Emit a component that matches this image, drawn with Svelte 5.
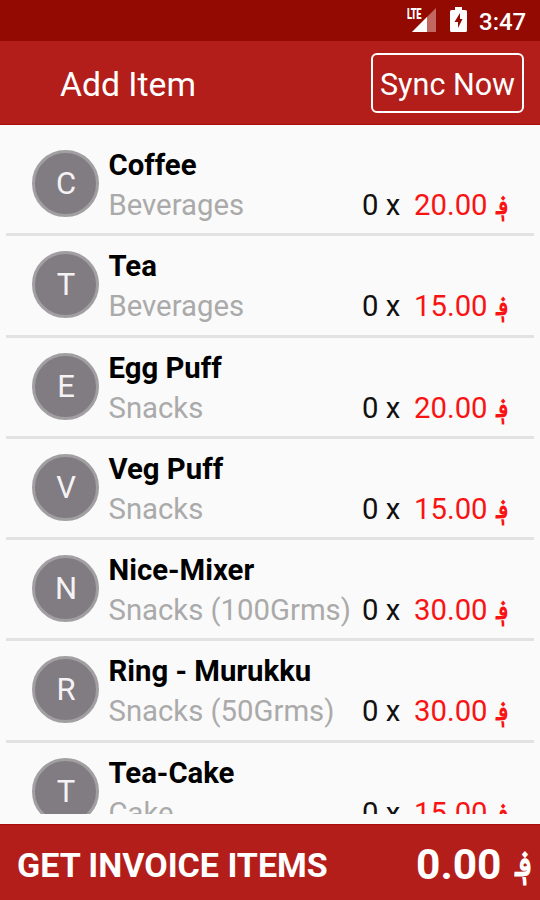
<script>
  let items = [
    { name: "Coffee", category: "Beverages", qty: 0, price: 20 },
    { name: "Tea", category: "Beverages", qty: 0, price: 15 },
    { name: "Egg Puff", category: "Snacks", qty: 0, price: 20 },
    { name: "Veg Puff", category: "Snacks", qty: 0, price: 15 },
    { name: "Nice-Mixer", category: "Snacks (100Grms)", qty: 0, price: 30 },
    { name: "Ring - Murukku", category: "Snacks (50Grms)", qty: 0, price: 30 },
    { name: "Tea-Cake", category: "Cake", qty: 0, price: 15 },
  ];
  let currency = "؋";

  $: total = items.reduce((sum, item) => sum + item.qty * item.price, 0);

  function addItem(item) {
    item.qty += 1;
    items = items;
  }
</script>

<div class="screen">
  <div class="status">
    <span class="lte">LTE</span>
    <svg class="signal" width="24" height="24" viewBox="0 0 24 24">
      <path d="M0 24 L24 0 V24 Z" fill="#c26863" />
      <path d="M0 24 L15 9 V24 Z" fill="#fff" />
    </svg>
    <svg class="battery" width="17" height="25" viewBox="0 0 17 25">
      <path d="M5 0 H12 V3 H15.5 Q17 3 17 4.5 V23.5 Q17 25 15.5 25 H1.5 Q0 25 0 23.5 V4.5 Q0 3 1.5 3 H5 Z" fill="#fff" />
      <path d="M10 6 L4.5 15 H8 V21 L12.5 12 H10 Z" fill="#930a03" />
    </svg>
    <span class="clock">3:47</span>
  </div>

  <div class="appbar">
    <span class="title">Add Item</span>
    <button class="sync">Sync Now</button>
  </div>

  <div class="list">
    {#each items as item}
      <!-- svelte-ignore a11y_click_events_have_key_events, a11y_no_static_element_interactions -->
      <div class="row" on:click={() => addItem(item)}>
        <div class="avatar">{item.name[0]}</div>
        <div class="info">
          <div class="name">{item.name}</div>
          <div class="details">
            <span class="category">{item.category}</span>
            <span class="qty">{item.qty} x</span>
            <span class="price">{item.price.toFixed(2)}</span>
            <span class="currency">{currency}</span>
          </div>
        </div>
      </div>
    {/each}
  </div>

  <div class="footer">
    <span class="invoice">GET INVOICE ITEMS</span>
    <span class="total">{total.toFixed(2)}</span>
    <span class="currency big">{currency}</span>
  </div>
</div>

<style>
  :global(body) {
    margin: 0;
  }

  .screen {
    width: 540px;
    height: 900px;
    display: flex;
    flex-direction: column;
    overflow: hidden;
    background-color: #fafafa;
    font-family: Roboto, "Liberation Sans", sans-serif;
    white-space: nowrap;
  }

  .status {
    height: 41px;
    flex: none;
    display: flex;
    align-items: flex-start;
    justify-content: flex-end;
    box-sizing: border-box;
    padding-right: 14px;
    background-color: #930a03;
    color: #fff;
  }

  .lte {
    width: 5px;
    margin-top: 8px;
    font-size: 15px;
    line-height: 13px;
    font-weight: 900;
    letter-spacing: -0.6px;
    transform: scaleX(0.62);
    transform-origin: left;
  }

  .signal {
    margin-top: 8px;
  }

  .battery {
    margin: 7px 0 0 14px;
  }

  .clock {
    width: 47px;
    margin: 8px 0 0 12px;
    font-size: 24px;
    line-height: 28px;
    font-weight: 500;
  }

  .appbar {
    height: 84px;
    flex: none;
    display: flex;
    align-items: center;
    justify-content: space-between;
    box-sizing: border-box;
    padding: 0 16px 0 60px;
    background-color: #b31e1a;
    border-bottom: 1px solid #a90e0a;
    color: #fff;
  }

  .title {
    font-size: 33.7px;
    line-height: 40px;
    padding-top: 4px;
  }

  .sync {
    width: 153px;
    height: 60px;
    padding: 4px 0 0;
    border: 2px solid #fff;
    border-radius: 6px;
    background: none;
    color: #fff;
    font-family: inherit;
    font-size: 30.5px;
  }

  .list {
    height: 689px;
    flex: none;
    box-sizing: border-box;
    padding: 10px 6px 0;
    overflow: hidden;
  }

  .row {
    height: 101.25px;
    display: flex;
    box-sizing: border-box;
    padding: 15px 0 0 26px;
    border-bottom: 3px solid #e2e2e2;
  }

  .avatar {
    width: 67px;
    height: 67px;
    flex: none;
    box-sizing: border-box;
    border: 3px solid #a19fa1;
    border-radius: 50%;
    background-color: #817b82;
    color: #f4f2f4;
    font-size: 31px;
    line-height: 61px;
    text-align: center;
    text-indent: 1px;
  }

  .info {
    flex: 1;
    margin-left: 9.5px;
  }

  .name {
    margin-top: -5px;
    font-size: 29.3px;
    line-height: 40px;
    font-weight: 700;
    color: #000;
  }

  .details {
    display: flex;
    font-size: 29.3px;
    line-height: 40px;
  }

  .category {
    flex: 1;
    color: #aaa;
  }

  .qty {
    width: 52px;
    color: #111;
  }

  .price {
    width: 80px;
    color: #f91414;
  }

  .currency {
    width: 40px;
    font-size: 26px;
    font-weight: 700;
    color: #f91414;
    transform: scaleX(0.85);
    transform-origin: 14px 50%;
  }

  .footer {
    height: 76px;
    margin-top: auto;
    display: flex;
    align-items: center;
    box-sizing: border-box;
    padding: 3px 0 0 17px;
    background-color: #b31e1a;
    border-top: 1px solid #a90e0a;
    color: #fff;
    font-weight: 700;
  }

  .invoice {
    flex: 1;
    padding-top: 2px;
    font-size: 34px;
  }

  .total {
    width: 96px;
    font-size: 42.5px;
  }

  .big {
    width: 28px;
    font-size: 36px;
    color: #fff;
    transform-origin: 20px 50%;
  }
</style>
